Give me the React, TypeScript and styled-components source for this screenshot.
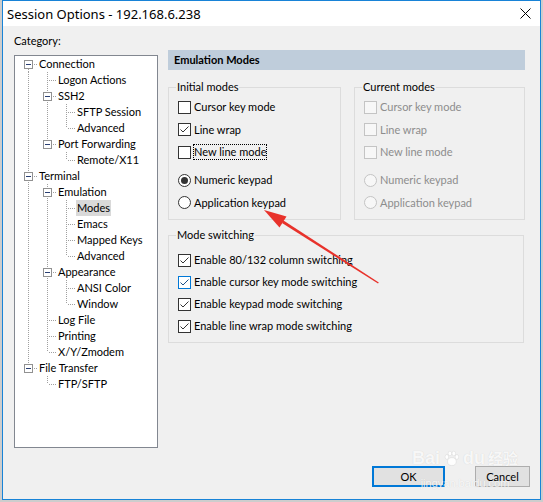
import React from 'react';
import styled, { createGlobalStyle } from 'styled-components';

const GlobalStyle = createGlobalStyle`
    html, body {
        margin: 0;
        padding: 0;
        background: #cdcdcd;
        font-family: Lato, "Noto Sans", sans-serif;
        font-size: 11px;
        color: #000;
    }
`;

const Page = styled.div`
    position: relative;
    width: 543px;
    height: 502px;
    padding-left: 2px;
    box-sizing: border-box;
    overflow: hidden;
`;

const Window = styled.div`
    width: 539px;
    height: 500px;
    box-sizing: border-box;
    border: 1px solid #1883d7;
    background: #f0f0f0;
    display: flex;
    flex-direction: column;
`;

const TitleBar = styled.div`
    height: 25px;
    flex-shrink: 0;
    background: #fff;
    display: flex;
    align-items: center;
    justify-content: space-between;
    padding: 0 9px 0 4px;
    font-family: "Noto Sans", sans-serif;
    font-size: 13px;
`;

const Body = styled.div`
    flex: 1;
    display: flex;
    flex-direction: column;
`;

const MainRow = styled.div`
    height: 422px;
    display: flex;
    padding-left: 11px;
`;

const LeftCol = styled.div`
    width: 144px;
    display: flex;
    flex-direction: column;
`;

const CategoryLabel = styled.div`
    height: 29px;
    box-sizing: border-box;
    padding-top: 7px;
    line-height: 16px;
`;

const TreeBox = styled.div`
    height: 393px;
    box-sizing: border-box;
    border: 1px solid #828790;
    background: #fff;
    padding-left: 4px;
`;

const TreeRow = styled.div`
    height: 16px;
    display: flex;
    align-items: center;
`;

const TreeLabel = styled.span<{ $selected?: boolean }>`
    line-height: 16px;
    padding: 0 1px;
    height: 16px;
    white-space: nowrap;
    background: ${p => (p.$selected ? '#d9d9d9' : 'transparent')};
`;

const RightCol = styled.div`
    width: 357px;
    margin-left: 10px;
    padding-top: 24px;
`;

const Header = styled.div`
    height: 20px;
    line-height: 20px;
    padding-left: 6px;
    background: #bfcddb;
    font-weight: bold;
`;

const GroupsRow = styled.div`
    display: flex;
    gap: 13px;
    margin-top: 10px;
`;

const Group = styled.fieldset<{ $width: number; $pad: number }>`
    width: ${p => p.$width}px;
    box-sizing: border-box;
    margin: 0;
    min-width: 0;
    border: 1px solid #dcdcdc;
    padding: ${p => p.$pad}px 5px 5px 7px;
`;

const Legend = styled.legend`
    padding: 0 1px;
    line-height: 14px;
`;

const ChoiceList = styled.div<{ $row: number; $offset?: number }>`
    display: flex;
    flex-direction: column;
    margin-top: ${p => p.$offset || 0}px;

    & > * {
        height: ${p => p.$row}px;
    }
`;

const ChoiceRow = styled.label<{ $disabled?: boolean }>`
    display: flex;
    align-items: center;
    margin-left: 2px;
    color: ${p => (p.$disabled ? '#8d8d8d' : '#000')};
`;

const CheckBox = styled.span<{ $disabled?: boolean; $hover?: boolean }>`
    width: 13px;
    height: 13px;
    box-sizing: border-box;
    flex-shrink: 0;
    border: 1px solid ${p => (p.$disabled ? '#c4c4c4' : p.$hover ? '#0078d7' : '#333')};
    background: ${p => (p.$disabled ? '#f7f7f7' : '#fff')};
    display: flex;
`;

const RadioBox = styled.span<{ $disabled?: boolean }>`
    width: 13px;
    height: 13px;
    box-sizing: border-box;
    flex-shrink: 0;
    border-radius: 50%;
    border: 1px solid ${p => (p.$disabled ? '#c4c4c4' : '#333')};
    background: ${p => (p.$disabled ? '#f7f7f7' : '#fff')};
    display: flex;
    align-items: center;
    justify-content: center;
`;

const RadioDot = styled.span`
    width: 7px;
    height: 7px;
    border-radius: 50%;
    background: #333;
`;

const ChoiceText = styled.span<{ $focus?: boolean }>`
    margin-left: 3px;
    line-height: 14px;
    white-space: nowrap;
    outline: ${p => (p.$focus ? '1px dotted #000' : 'none')};
`;

const ButtonRow = styled.div`
    display: flex;
    justify-content: flex-end;
    gap: 30px;
    margin-top: 18px;
    padding-right: 10px;
`;

const Button = styled.button<{ $default?: boolean; $width: number }>`
    width: ${p => p.$width}px;
    height: 21px;
    padding: 0;
    box-sizing: border-box;
    font-family: inherit;
    font-size: 11px;
    color: #000;
    background: #e1e1e1;
    border: ${p => (p.$default ? '2px solid #0078d7' : '1px solid #adadad')};
`;

const Overlay = styled.svg`
    position: absolute;
    left: 0;
    top: 0;
    pointer-events: none;
`;

const Watermark = styled.div`
    position: absolute;
    left: 412px;
    top: 448px;
    color: rgba(255, 255, 255, 0.85);
    text-shadow: 0 0 1px rgba(0, 0, 0, 0.15);
    pointer-events: none;
    display: flex;
    flex-direction: column;
    align-items: center;
`;

const WatermarkBrand = styled.div`
    font-family: "Liberation Sans", sans-serif;
    font-size: 18px;
    line-height: 20px;
    font-weight: bold;
    display: flex;
    align-items: center;
    gap: 3px;
`;

const WatermarkCjk = styled.span`
    font-family: "Noto Sans CJK SC", sans-serif;
    font-size: 15px;
    line-height: 20px;
    font-weight: bold;
`;

const WatermarkUrl = styled.div`
    font-family: "Liberation Sans", sans-serif;
    font-size: 11px;
    line-height: 13px;
    margin-top: 9px;
`;

type Conn = 'first' | 'tee' | 'last';

interface Node {
    label: string;
    guides: boolean[];
    conn: Conn;
    box?: boolean;
    selected?: boolean;
}

const tree: Node[] = [
    { label: 'Connection', guides: [], conn: 'first', box: true },
    { label: 'Logon Actions', guides: [true], conn: 'tee' },
    { label: 'SSH2', guides: [true], conn: 'tee', box: true },
    { label: 'SFTP Session', guides: [true, true], conn: 'tee' },
    { label: 'Advanced', guides: [true, true], conn: 'last' },
    { label: 'Port Forwarding', guides: [true], conn: 'last', box: true },
    { label: 'Remote/X11', guides: [true, false], conn: 'last' },
    { label: 'Terminal', guides: [], conn: 'tee', box: true },
    { label: 'Emulation', guides: [true], conn: 'tee', box: true },
    { label: 'Modes', guides: [true, true], conn: 'tee', selected: true },
    { label: 'Emacs', guides: [true, true], conn: 'tee' },
    { label: 'Mapped Keys', guides: [true, true], conn: 'tee' },
    { label: 'Advanced', guides: [true, true], conn: 'last' },
    { label: 'Appearance', guides: [true], conn: 'tee', box: true },
    { label: 'ANSI Color', guides: [true, true], conn: 'tee' },
    { label: 'Window', guides: [true, true], conn: 'last' },
    { label: 'Log File', guides: [true], conn: 'tee' },
    { label: 'Printing', guides: [true], conn: 'tee' },
    { label: 'X/Y/Zmodem', guides: [true], conn: 'last' },
    { label: 'File Transfer', guides: [], conn: 'last', box: true },
    { label: 'FTP/SFTP', guides: [false], conn: 'last' },
];

const DOT = '#a0a0a0';

const GuideCell = ({ line }: { line: boolean }) => (
    <svg width="19" height="16">
        {line && <line x1="9.5" y1="0" x2="9.5" y2="16" stroke={DOT} strokeDasharray="1 1" />}
    </svg>
);

const ConnCell = ({ conn, box }: { conn: Conn; box?: boolean }) => {
    const y1 = conn === 'first' ? 9 : 0;
    const y2 = conn === 'last' ? 8 : 16;
    return (
        <svg width="19" height="16">
            <line x1="9.5" y1={y1} x2="9.5" y2={y2} stroke={DOT} strokeDasharray="1 1" />
            <line x1="11" y1="8.5" x2="19" y2="8.5" stroke={DOT} strokeDasharray="1 1" />
            {box && (
                <>
                    <rect x="5.5" y="4.5" width="8" height="8" fill="#fff" stroke="#919191" />
                    <line x1="7" y1="8.5" x2="12" y2="8.5" stroke="#2a3f73" />
                </>
            )}
        </svg>
    );
};

const renderTreeRow = (node: Node, i: number) => (
    <TreeRow key={i}>
        {node.guides.map((g, j) => <GuideCell key={j} line={g} />)}
        <ConnCell conn={node.conn} box={node.box} />
        <TreeLabel $selected={node.selected}>{node.label}</TreeLabel>
    </TreeRow>
);

interface CheckProps {
    label: string;
    checked?: boolean;
    disabled?: boolean;
    hover?: boolean;
    focus?: boolean;
}

const Check = ({ label, checked, disabled, hover, focus }: CheckProps) => (
    <ChoiceRow $disabled={disabled}>
        <CheckBox $disabled={disabled} $hover={hover}>
            {checked && (
                <svg width="11" height="11">
                    <polyline points="1.5,5.5 4,8 9.5,2.5" fill="none" stroke={hover ? '#1d4f87' : '#333'} strokeWidth="1" />
                </svg>
            )}
        </CheckBox>
        <ChoiceText $focus={focus}>{label}</ChoiceText>
    </ChoiceRow>
);

const Radio = ({ label, checked, disabled }: CheckProps) => (
    <ChoiceRow $disabled={disabled}>
        <RadioBox $disabled={disabled}>{checked && <RadioDot />}</RadioBox>
        <ChoiceText>{label}</ChoiceText>
    </ChoiceRow>
);

const ModeGroup = ({ title, width, disabled }: { title: string; width: number; disabled?: boolean }) => (
    <Group $width={width} $pad={2}>
        <Legend>{title}</Legend>
        <ChoiceList $row={22.5}>
            <Check label="Cursor key mode" disabled={disabled} />
            <Check label="Line wrap" checked={!disabled} disabled={disabled} />
            <Check label="New line mode" disabled={disabled} focus={!disabled} />
        </ChoiceList>
        <ChoiceList $row={22.5} $offset={5.5}>
            <Radio label="Numeric keypad" checked={!disabled} disabled={disabled} />
            <Radio label="Application keypad" disabled={disabled} />
        </ChoiceList>
    </Group>
);

const App = () => {
    return (
        <Page>
            <GlobalStyle />
            <Window>
                <TitleBar>
                    <span>Session Options - 192.168.6.238</span>
                    <svg width="11" height="11">
                        <path d="M0.5 0.5 L10.5 10.5 M10.5 0.5 L0.5 10.5" stroke="#000" strokeWidth="1" />
                    </svg>
                </TitleBar>
                <Body>
                    <MainRow>
                        <LeftCol>
                            <CategoryLabel>Category:</CategoryLabel>
                            <TreeBox>{tree.map(renderTreeRow)}</TreeBox>
                        </LeftCol>
                        <RightCol>
                            <Header>Emulation Modes</Header>
                            <GroupsRow>
                                <ModeGroup title="Initial modes" width={173} />
                                <ModeGroup title="Current modes" width={171} disabled />
                            </GroupsRow>
                            <Group $width={356} $pad={7} style={{ marginTop: 8 }}>
                                <Legend>Mode switching</Legend>
                                <ChoiceList $row={22}>
                                    <Check label="Enable 80/132 column switching" checked />
                                    <Check label="Enable cursor key mode switching" checked hover />
                                    <Check label="Enable keypad mode switching" checked />
                                    <Check label="Enable line wrap mode switching" checked />
                                </ChoiceList>
                            </Group>
                        </RightCol>
                    </MainRow>
                    <ButtonRow>
                        <Button $default $width={73}>OK</Button>
                        <Button $width={55}>Cancel</Button>
                    </ButtonRow>
                </Body>
            </Window>
            <Watermark>
                <WatermarkBrand>
                    <span>Bai</span>
                    <svg width="17" height="17" viewBox="0 0 22 22">
                        <g fill="rgba(255,255,255,0.9)" stroke="rgba(0,0,0,0.08)">
                            <ellipse cx="5" cy="9" rx="2.3" ry="3" />
                            <ellipse cx="9" cy="4.5" rx="2.3" ry="3" />
                            <ellipse cx="14" cy="4.5" rx="2.3" ry="3" />
                            <ellipse cx="18" cy="9" rx="2.3" ry="3" />
                            <ellipse cx="11.5" cy="15" rx="5.5" ry="5" />
                        </g>
                    </svg>
                    <span>du</span>
                    <WatermarkCjk>经验</WatermarkCjk>
                </WatermarkBrand>
                <WatermarkUrl>jingyan.baidu.com</WatermarkUrl>
            </Watermark>
            <Overlay width="543" height="502">
                <polygon points="378,283.6 378.8,282.4 283.5,220.5 282,223" fill="#e8322b" />
                <polygon points="264,210 286.5,216.5 279.5,227.5" fill="#e8322b" />
            </Overlay>
        </Page>
    );
};

export default App;
